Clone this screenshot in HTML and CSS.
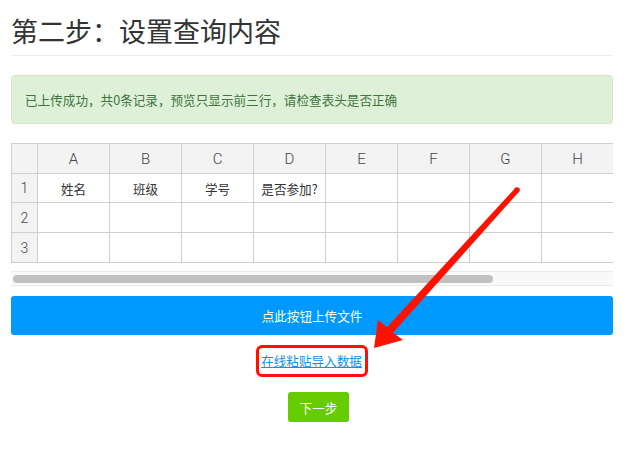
FILE: index.html
```html
<!DOCTYPE html>
<html lang="zh-CN">
<head>
<meta charset="utf-8">
<title>第二步：设置查询内容</title>
<link rel="stylesheet" href="styles.css">
</head>
<body>
<div class="page">
  <h1 class="title">第二步：设置查询内容</h1>
  <div class="alert">已上传成功，共0条记录，预览只显示前三行，请检查表头是否正确</div>

  <div class="sheet">
    <div class="cell corner"></div>
    <div class="cell head">A</div>
    <div class="cell head">B</div>
    <div class="cell head">C</div>
    <div class="cell head">D</div>
    <div class="cell head">E</div>
    <div class="cell head">F</div>
    <div class="cell head">G</div>
    <div class="cell head">H</div>

    <div class="cell rownum">1</div>
    <div class="cell">姓名</div>
    <div class="cell">班级</div>
    <div class="cell">学号</div>
    <div class="cell">是否参加?</div>
    <div class="cell"></div>
    <div class="cell"></div>
    <div class="cell"></div>
    <div class="cell"></div>

    <div class="cell rownum">2</div>
    <div class="cell"></div><div class="cell"></div><div class="cell"></div><div class="cell"></div>
    <div class="cell"></div><div class="cell"></div><div class="cell"></div><div class="cell"></div>

    <div class="cell rownum">3</div>
    <div class="cell"></div><div class="cell"></div><div class="cell"></div><div class="cell"></div>
    <div class="cell"></div><div class="cell"></div><div class="cell"></div><div class="cell"></div>
  </div>

  <div class="scrollbar"><div class="thumb"></div></div>

  <button class="btn-upload" type="button">点此按钮上传文件</button>

  <div class="paste-row">
    <span class="highlight"><a class="paste-link" href="#">在线粘贴导入数据</a></span>
  </div>

  <div class="next-row">
    <button class="btn-next" type="button">下一步</button>
  </div>

  <svg class="annot-arrow" width="638" height="455" viewBox="0 0 638 455">
    <circle cx="517" cy="190" r="2.8" fill="#ff1100"/>
    <polygon fill="#ff1100" points="515.1,188.3 518.9,191.7 393,332.7 403,340 374,348 378,320 387,327.3"/>
  </svg>
</div>
</body>
</html>
```

FILE: styles.css
```css
html, body {
  margin: 0;
  padding: 0;
  background: #fff;
}

body {
  font-family: "Noto Sans CJK SC", "Liberation Sans", sans-serif;
  font-size: 12.6px;
  color: #333;
}

.page {
  position: relative;
  width: 602px;
  padding: 0 25px 30px 11px;
}

.title {
  margin: 0;
  padding: 14px 0 7px;
  font-size: 27px;
  line-height: 34px;
  font-weight: 400;
  color: #333;
  border-bottom: 1px solid #eee;
}

.alert {
  margin-top: 19px;
  padding: 14px 13px;
  line-height: 19px;
  background: #dff0d8;
  border: 1px solid #d6e9c6;
  border-radius: 4px;
  color: #3c763d;
}

.sheet {
  margin-top: 19px;
  display: grid;
  grid-template-columns: 25px repeat(8, 71px);
  grid-template-rows: 29px 28px 29px 29px;
  gap: 1px;
  padding: 1px;
  background: #cfcfcf;
}

.cell {
  background: #fff;
  display: flex;
  align-items: center;
  justify-content: center;
  white-space: nowrap;
  color: #333;
}

.corner,
.head {
  background: #f3f3f3;
}

.head,
.rownum {
  font-family: "Roboto", "Liberation Sans", sans-serif;
  font-weight: 300;
  font-size: 15px;
  color: #444;
}

.rownum {
  background: #f3f3f3;
  font-size: 14px;
}

.scrollbar {
  margin-top: 8px;
  height: 12px;
  padding: 3px 2px 0;
  box-sizing: border-box;
  height: 15px;
  background: #f9f9f9;
  border-top: 1px solid #eaeaea;
  border-bottom: 1px solid #eaeaea;
}

.thumb {
  width: 480px;
  height: 8px;
  border-radius: 4px;
  background: #c1c1c1;
}

.btn-upload {
  display: block;
  width: 100%;
  margin-top: 10px;
  height: 39px;
  border: 0;
  border-radius: 3px;
  background: #0099ff;
  color: #fff;
  font-family: inherit;
  font-size: 12.6px;
  padding: 0;
}

.paste-row {
  margin-top: 10px;
  text-align: center;
  line-height: 0;
}

.highlight {
  display: inline-block;
  border: 3px solid #ff1100;
  border-radius: 6px;
  padding: 4px 3px 4px 2px;
  line-height: 18px;
}

.paste-link {
  color: #1190ea;
  text-decoration: underline;
}

.next-row {
  margin-top: 15px;
  display: flex;
  justify-content: center;
  padding-left: 13px;
}

.btn-next {
  width: 61px;
  height: 30px;
  border: 0;
  border-radius: 3px;
  background: #66cc00;
  color: #fff;
  font-family: inherit;
  font-size: 12.6px;
  padding: 0;
}

.annot-arrow {
  position: absolute;
  left: 0;
  top: 0;
  pointer-events: none;
}
```
